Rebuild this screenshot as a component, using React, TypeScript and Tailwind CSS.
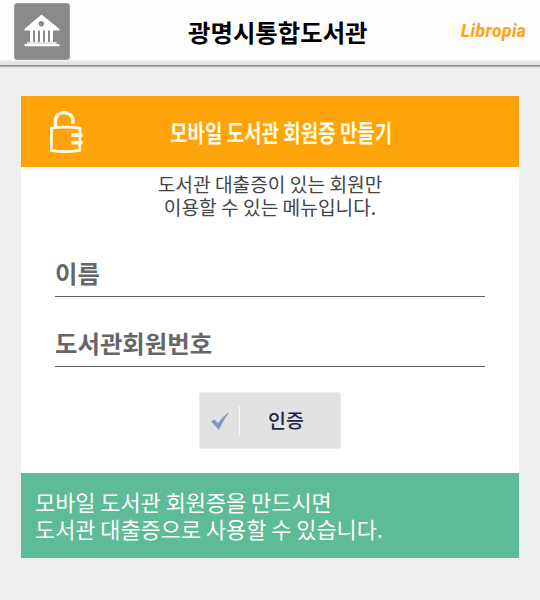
import React, { useState } from 'react';

function LibraryIcon() {
  return (
    <svg width="36" height="33" viewBox="0 0 36 33" fill="#fff">
      <path fillRule="evenodd" d="M17.5 0.5L35.5 15V16.5H0.5V15ZM17.3 7A2.7 2.7 0 1 0 17.3 12.4A2.7 2.7 0 1 0 17.3 7Z" />
      <path d="M6 16h3v12H6zM11 16h3v12h-3zM16 16h3v12h-3zM21 16h3v12h-3zM26 16h3v12h-3z" />
      <path d="M3 28H32.5V30H3Z" fill="#e2e2e2" />
      <path d="M0.5 30H35.5V32.3H0.5Z" />
    </svg>
  );
}

function LockIcon() {
  return (
    <svg width="34" height="44" viewBox="0 0 34 44" fill="none" stroke="#fffbe0">
      <path d="M6.5 17V10.5C6.5 5.6 10.6 2.5 15 2.5S24 5.8 24 10.5V14" strokeWidth="3.4" />
      <path d="M30.8 24V18.2Q16 16 2.4 18.2V40.3Q16 43 30.8 40.3V34M30.8 26V32" strokeWidth="2.8" />
      <path d="M22.5 25.2H33.5M22.5 32.7H33.5" strokeWidth="3.7" />
    </svg>
  );
}

function CheckIcon() {
  return (
    <svg width="20" height="20" viewBox="0 0 20 20" fill="#8298c2">
      <path d="M0 10.5L3.5 8.5L7 12Q12 5 18.5 1Q13 8 8 19Z" />
    </svg>
  );
}

type FieldProps = {
  label: string;
  value: string;
  onChange: (value: string) => void;
};

function Field({ label, value, onChange }: FieldProps) {
  return (
    <input
      aria-label={label}
      placeholder={label}
      value={value}
      onChange={e => onChange(e.target.value)}
      className="block w-full h-[47px] pb-px border-b border-[#626262] text-[24.4px] font-bold text-[#333] placeholder:text-[#666] outline-none"
    />
  );
}

export default function App() {
  const [name, setName] = useState('');
  const [memberNo, setMemberNo] = useState('');

  return (
    <div className="w-full h-[600px] bg-[#eee] overflow-hidden font-['Noto_Sans_CJK_KR','Noto_Sans',sans-serif]">
      <header className="grid grid-cols-[187px_1fr_80px] h-[68px] bg-[linear-gradient(to_bottom,#fdfdfd_0,#fdfdfd_59px,#e5e5e5_62px,#e3e3e3_65px,#8d8d8d_65px,#8d8d8d_66px,#b5b5b5_66px,#b5b5b5_67px,#e0e0e0_67px)]">
        <button className="ml-[14px] mt-[3px] w-14 h-[57px] pb-[3px] rounded-[3px] bg-[#8a8a8a] border border-[#9c9c9c] flex items-center justify-center">
          <LibraryIcon />
        </button>
        <h1 className="mt-[14px] pl-px text-[24.4px] leading-[36px] font-bold text-black whitespace-nowrap">광명시통합도서관</h1>
        <span className="mt-5 pl-px leading-[22px] text-[17.5px] font-extrabold italic text-[#fba51c] tracking-[0.4px] font-['Roboto',sans-serif]">Libropia</span>
      </header>

      <main className="mx-[21px] mt-7 bg-white">
        <div className="h-[71px] bg-[#ffa30a] flex">
          <div className="w-[149px] pl-7 pt-[14px]">
            <LockIcon />
          </div>
          <h2 className="pt-[19px] text-[24px] leading-[34px] font-bold text-[#fffbe0] whitespace-nowrap origin-left scale-x-[0.79]">
            모바일 도서관 회원증 만들기
          </h2>
        </div>

        <p className="h-[83px] pt-[6px] text-center text-[19.2px] leading-[23px] text-[#444]">
          도서관 대출증이 있는 회원만<br />
          이용할 수 있는 메뉴입니다.
        </p>

        <form className="h-[223px] px-[34px]" onSubmit={e => e.preventDefault()}>
          <div className="space-y-[23px]">
            <Field label="이름" value={name} onChange={setName} />
            <Field label="도서관회원번호" value={memberNo} onChange={setMemberNo} />
          </div>
          <button className="mt-[25px] ml-[144px] w-[142px] h-[57px] rounded-[3px] bg-[#e2e2e2] border border-[#ececec] flex items-center">
            <span className="w-10 h-[30px] pl-[11px] flex items-center border-r border-[#f8f8f8]">
              <CheckIcon />
            </span>
            <span className="flex-1 pr-[8px] pb-[2px] text-[19.5px] leading-[30px] font-medium text-[#1c2749]">인증</span>
          </button>
        </form>

        <p className="h-[85px] pl-[14px] pt-[15px] bg-[#5dbb97] text-white text-[21.9px] leading-[27px] whitespace-nowrap">
          모바일 도서관 회원증을 만드시면<br />
          도서관 대출증으로 사용할 수 있습니다.
        </p>
      </main>
    </div>
  );
}
